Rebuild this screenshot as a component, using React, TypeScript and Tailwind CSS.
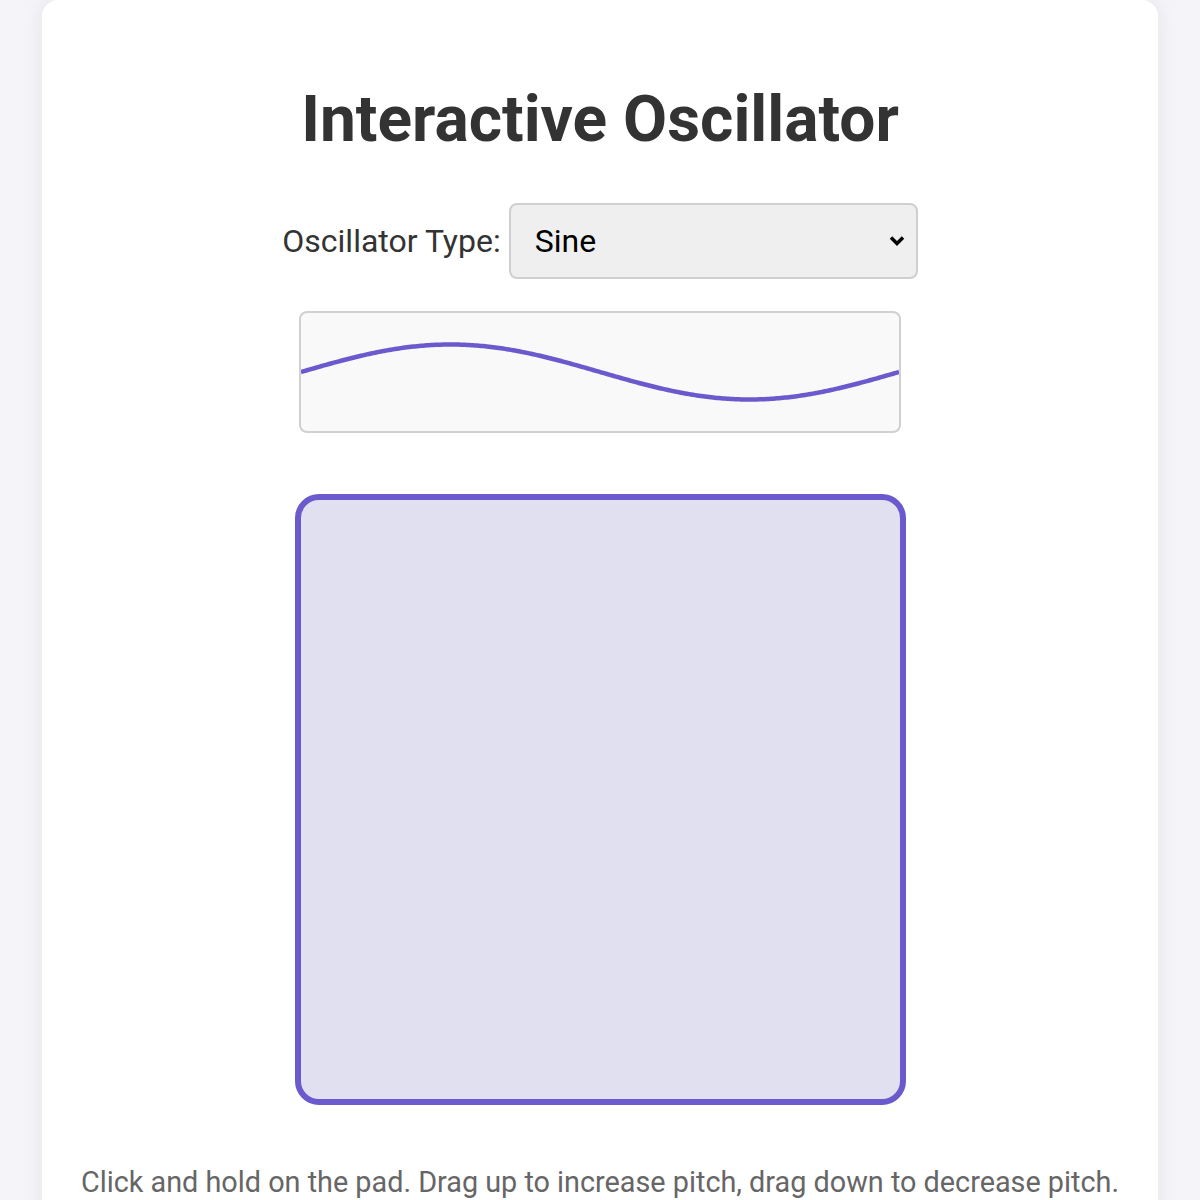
import { useState } from "react";

const W = 598;
const H = 118;

function wavePath() {
  const pts: string[] = [];
  for (let x = 0; x <= W; x += 2) {
    const y = H / 2 - 27.5 * Math.sin((2 * Math.PI * x) / W);
    pts.push(`${x === 0 ? "M" : "L"}${x} ${y.toFixed(2)}`);
  }
  return pts.join(" ");
}

export default function App() {
  const [type, setType] = useState("sine");

  return (
    <div className="min-h-screen bg-[#f4f4f9] px-[42px] font-['Roboto',sans-serif]">
      <div className="bg-white rounded-[16px] shadow-[0_0_20px_rgba(0,0,0,0.08)] pt-[82px] pb-[40px] flex flex-col items-center">
        <h1 className="text-[64px] font-bold leading-[75px] text-[#333]">
          Interactive Oscillator
        </h1>

        <div className="mt-[46px] flex items-center gap-[8px]">
          <label className="text-[32px] text-[#333] leading-[38px]">
            Oscillator Type:
          </label>
          <div className="relative">
            <select
              value={type}
              onChange={(e) => setType(e.target.value)}
              className="appearance-none w-[409px] h-[76px] pl-[24px] pr-[50px] text-[32px] text-black bg-[#efefef] border-2 border-[#cfcfcf] rounded-[8px] outline-none"
            >
              <option value="sine">Sine</option>
              <option value="square">Square</option>
              <option value="sawtooth">Sawtooth</option>
              <option value="triangle">Triangle</option>
            </select>
            <svg
              className="absolute right-[13px] top-[32px] pointer-events-none"
              width="16"
              height="11"
              viewBox="0 0 16 11"
            >
              <path
                d="M2 2.5 L8 8.5 L14 2.5"
                fill="none"
                stroke="#000"
                strokeWidth="3.5"
              />
            </svg>
          </div>
        </div>

        <div className="mt-[32px] w-[602px] h-[122px] border-2 border-[#d0d0d0] rounded-[8px] bg-[#f9f9f9] overflow-hidden">
          <svg width={W} height={H} viewBox={`0 0 ${W} ${H}`}>
            <path
              d={wavePath()}
              fill="none"
              stroke="#6a5acd"
              strokeWidth="4.5"
            />
          </svg>
        </div>

        <div className="mt-[61px] w-[611px] h-[611px] border-[6px] border-[#6a5acd] rounded-[24px] bg-[#e1e0f0] cursor-pointer" />

        <p className="mt-[61px] text-[28.8px] leading-[33px] text-[#666]">
          Click and hold on the pad. Drag up to increase pitch, drag down to
          decrease pitch.
        </p>
      </div>
    </div>
  );
}
